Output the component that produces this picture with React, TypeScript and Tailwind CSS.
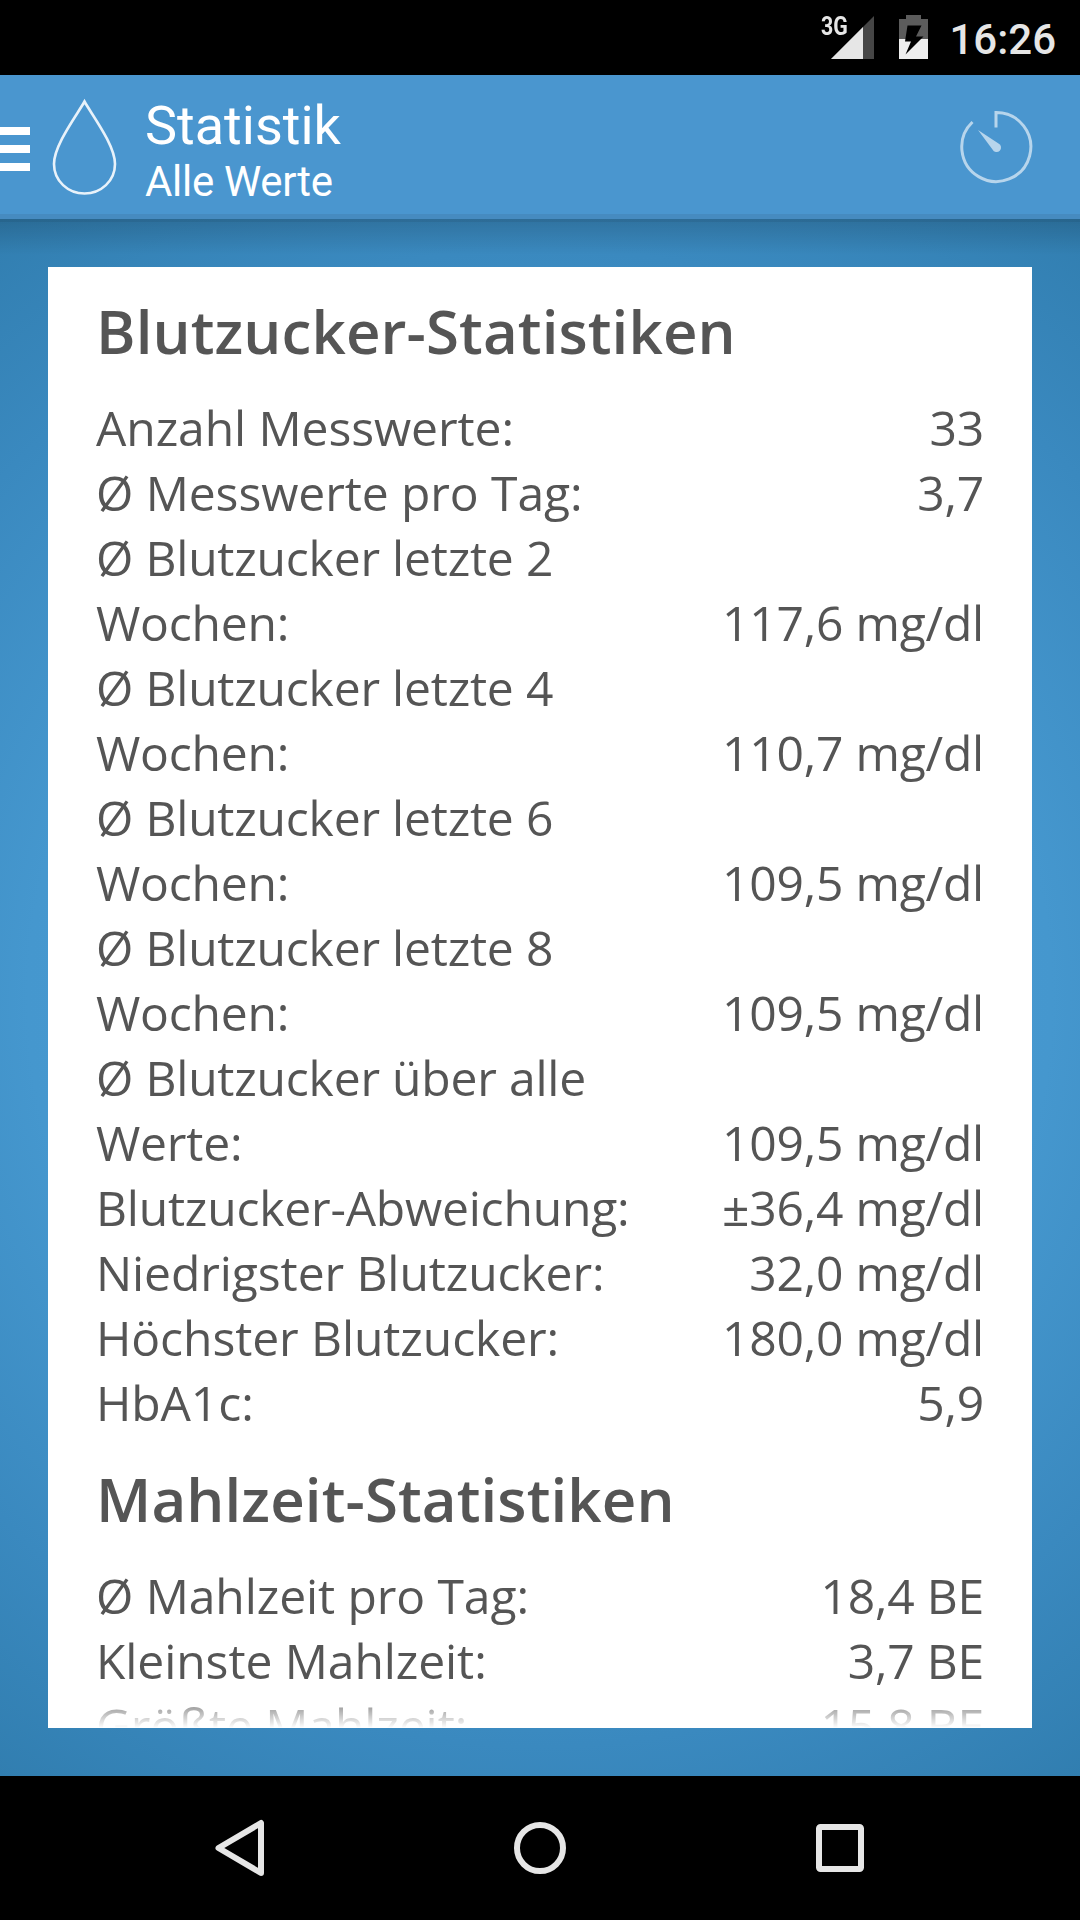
import React from 'react';
import clsx from 'clsx';

interface StatRow {
  label: string;
  value: string;
  tight?: boolean;
}

interface StatSection {
  title: string;
  rows: StatRow[];
}

const sections: StatSection[] = [
  {
    title: 'Blutzucker-Statistiken',
    rows: [
      { label: 'Anzahl Messwerte:', value: '33' },
      { label: 'Ø Messwerte pro Tag:', value: '3,7' },
      { label: 'Ø Blutzucker letzte 2 Wochen:', value: '117,6 mg/dl', tight: true },
      { label: 'Ø Blutzucker letzte 4 Wochen:', value: '110,7 mg/dl', tight: true },
      { label: 'Ø Blutzucker letzte 6 Wochen:', value: '109,5 mg/dl', tight: true },
      { label: 'Ø Blutzucker letzte 8 Wochen:', value: '109,5 mg/dl', tight: true },
      { label: 'Ø Blutzucker über alle Werte:', value: '109,5 mg/dl', tight: true },
      { label: 'Blutzucker-Abweichung:', value: '±36,4 mg/dl', tight: true },
      { label: 'Niedrigster Blutzucker:', value: '32,0 mg/dl' },
      { label: 'Höchster Blutzucker:', value: '180,0 mg/dl' },
      { label: 'HbA1c:', value: '5,9' }
    ]
  },
  {
    title: 'Mahlzeit-Statistiken',
    rows: [
      { label: 'Ø Mahlzeit pro Tag:', value: '18,4 BE' },
      { label: 'Kleinste Mahlzeit:', value: '3,7 BE' },
      { label: 'Größte Mahlzeit:', value: '15,8 BE' }
    ]
  }
];

const StatusBar: React.FC = () => (
  <div className="flex h-[75px] shrink-0 items-start justify-end bg-black pr-6 text-[#e6e6e6]">
    <div className="relative mt-4 h-[43px] w-[53px]">
      <svg className="absolute inset-0" width="53" height="43" viewBox="0 0 53 43">
        <path d="M53 0V43H10Z" fill="#464646" />
        <path d="M42 11V43H10Z" fill="#e6e6e6" />
      </svg>
      <span className="absolute top-0 left-0 origin-left scale-x-[0.82] text-[26px] leading-[20px] font-bold">3G</span>
    </div>
    <svg className="mt-[15px] ml-[25px]" width="29" height="44" viewBox="0 0 29 44">
      <path d="M7 0H22V4H29V24H0V4H7Z" fill="#5c5c5c" />
      <path d="M0 24H29V44H0Z" fill="#eeeeee" />
      <path d="M8.500 10.500H22.500L17 21.500H24.500L6.500 39.500L12 26.500H6Z" fill="#000" />
    </svg>
    <span className="mt-[15px] ml-[21px] text-[42px] leading-[50px] font-medium">16:26</span>
  </div>
);

const AppBar: React.FC = () => (
  <header className="flex h-[144px] shrink-0 items-start border-b-[5px] border-[#468bc0] bg-[#4a96cf] text-white">
    <div className="mt-[52px] flex w-[30px] flex-col gap-[10px]">
      <div className="h-2 bg-white" />
      <div className="h-2 bg-white" />
      <div className="h-2 bg-white" />
    </div>
    <svg className="mt-[22px] ml-[21px]" width="68" height="100" viewBox="0 0 68 100" fill="none" stroke="#e8f2fa" strokeWidth="2.600">
      <path d="M33.500 4.500C26 18 3 48 3 67C3 84 17 96.500 33.500 96.500S64 84 64 67C64 48 41 18 33.500 4.500Z" />
    </svg>
    <div className="ml-[26px] flex-1">
      <h1 className="mt-[19px] text-[54px] leading-[63px]">Statistik</h1>
      <p className="text-[42px] leading-[49px] tracking-[-0.3px]">Alle Werte</p>
    </div>
    <svg className="mt-[34px] mr-[46px]" width="76" height="76" viewBox="0 0 76 76" fill="none">
      <path d="M14.500 13A34.500 34.500 0 1 0 38 3.500V18.500" stroke="#b7d5ec" strokeWidth="3" />
      <path d="M20 21L40.500 34.500A4.500 4.500 0 1 1 34.500 40.500Z" fill="#b7d5ec" />
    </svg>
  </header>
);

const Section: React.FC<{ section: StatSection }> = ({ section }) => (
  <section>
    <h2 className="mb-[23px] text-[60px] leading-[82px] font-semibold tracking-[0.1px]">{section.title}</h2>
    {section.rows.map((row) => (
      <div key={row.label} className="flex items-end justify-between text-[48px] leading-[65px]">
        <span className={clsx('max-w-[560px]', row.tight ? 'tracking-[-0.2px]' : 'tracking-[-0.08px]')}>
          {row.label}
        </span>
        <span className="tracking-[-0.2px] whitespace-nowrap">{row.value}</span>
      </div>
    ))}
  </section>
);

const NavBar: React.FC = () => (
  <nav className="flex h-[144px] shrink-0 items-center justify-between bg-black px-[204px]">
    <svg width="72" height="72" viewBox="0 0 72 72" fill="none" stroke="#e6e6e6" strokeWidth="6" strokeLinejoin="round">
      <path d="M57 11V61L14.500 36Z" />
    </svg>
    <svg width="72" height="72" viewBox="0 0 72 72" fill="none" stroke="#e6e6e6" strokeWidth="6">
      <circle cx="36" cy="36" r="23" />
    </svg>
    <svg width="72" height="72" viewBox="0 0 72 72" fill="none" stroke="#e6e6e6" strokeWidth="6">
      <rect x="15" y="15" width="42" height="42" rx="1.500" />
    </svg>
  </nav>
);

export default function App() {
  return (
    <div className="flex h-[1920px] w-[1080px] flex-col overflow-hidden font-['Roboto',sans-serif]">
      <StatusBar />
      <AppBar />
      <main className="min-h-0 flex-1 bg-[linear-gradient(to_bottom,rgba(0,0,0,0.2)_3px,rgba(0,0,0,0.14)_3px,transparent_36px),radial-gradient(circle_farthest-corner,#4ca2dc_0%,#4597ce_54%,#3a89bf_79%,#317eb0_100%)] p-12">
        <div className="h-full overflow-hidden bg-white px-12 pt-[23px] font-['Open_Sans',sans-serif] text-[#555555]">
          <div className="flex h-full flex-col gap-[23px] [mask-image:linear-gradient(to_bottom,black_calc(100%-38px),transparent)]">
            {sections.map((section) => (
              <Section key={section.title} section={section} />
            ))}
          </div>
        </div>
      </main>
      <NavBar />
    </div>
  );
}
